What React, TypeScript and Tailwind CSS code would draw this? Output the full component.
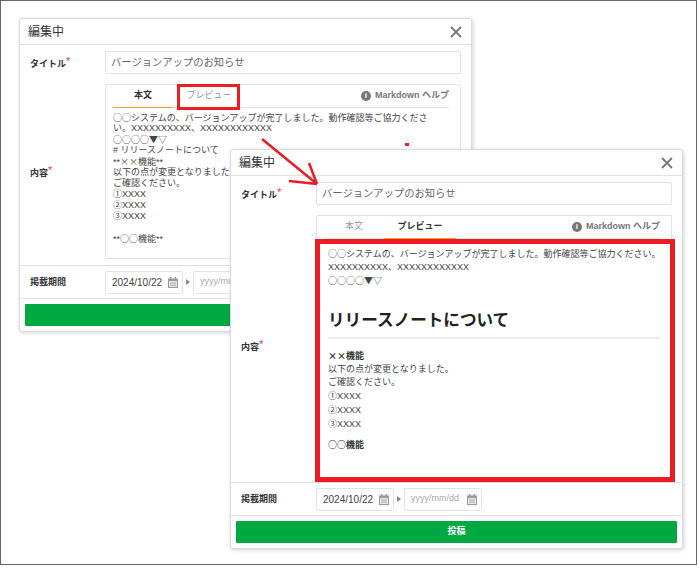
import React from "react";

const font = { fontFamily: '"Liberation Sans","Noto Sans CJK JP",sans-serif' };

function J({ children }: { children: React.ReactNode }) {
  return <span className="font-['Noto_Sans_CJK_JP']">{children}</span>;
}

function Cal({ c = "#9a9a9a" }: { c?: string }) {
  return (
    <svg width="10" height="11" viewBox="0 0 10 11" className="shrink-0">
      <rect x="0.5" y="2" width="9" height="8.5" fill="#e8e8e8" stroke={c} />
      <rect x="0" y="2" width="10" height="2" fill={c} />
      <rect x="2" y="0" width="1.5" height="3" fill={c} />
      <rect x="6.5" y="0" width="1.500" height="3" fill={c} />
      <path d="M2 6h6M2 8.200h6" stroke={c} strokeWidth="0.8" />
    </svg>
  );
}

function Label({ children, req }: { children: React.ReactNode; req?: boolean }) {
  return (
    <div className="w-[74px] pl-[10px] shrink-0 text-[9px] font-bold text-[#333] leading-none">
      {children}
      {req && <span className="text-[#e8336b] text-[11px] font-normal align-[2px]">*</span>}
    </div>
  );
}

function Close() {
  return (
    <svg width="12" height="12" viewBox="0 0 12 12" className="shrink-0">
      <path d="M1 1l10 10M11 1L1 11" stroke="#777" strokeWidth="1.8" />
    </svg>
  );
}

function Help() {
  return (
    <div className="ml-auto flex items-center gap-[4px] text-[9px] font-bold text-[#777]">
      <span className="w-[10px] h-[10px] rounded-full bg-[#777] text-white text-[8px] leading-[10px] text-center font-bold">i</span>
      Markdown ヘルプ
    </div>
  );
}

function Tabs({ active }: { active: 0 | 1 }) {
  const on = "h-[23px] flex items-center justify-center font-bold text-[#333] border-b border-[#f39a2b]";
  const off = "h-[23px] flex items-center justify-center text-[#999]";
  return (
    <div className="flex items-center h-[23px] ml-[7px] mr-[11px] text-[9px] border-b border-[#e6e6e6]">
      <div className={"w-[60px] " + (active === 0 ? on : off)}>本文</div>
      <div className={"w-[72px] " + (active === 1 ? on : off)}>プレビュー</div>
      <Help />
    </div>
  );
}

function Dates() {
  return (
    <div className="flex items-center h-[33px] border-t border-[#e2e2e2]">
      <Label>掲載期間</Label>
      <div className="ml-[11px] w-[78px] h-[23px] border border-[#e2e2e2] rounded-[2px] flex items-center pl-[6px] pr-[4px] justify-between text-[10px] text-[#444]">
        2024/10/22
        <Cal />
      </div>
      <span className="mx-[3px] w-0 h-0 border-y-[3px] border-y-transparent border-l-[4px] border-l-[#888]" />
      <div className="w-[78px] h-[23px] border border-[#e2e2e2] rounded-[2px] flex items-center pl-[6px] pr-[4px] justify-between text-[9px] text-[#aaa]">
        yyyy/mm/dd
        <Cal />
      </div>
    </div>
  );
}

function Shell({ children }: { children: React.ReactNode }) {
  return (
    <div className="w-full bg-white rounded-[3px] border border-[#dcdcdc] shadow-[1px_1px_4px_rgba(0,0,0,0.18)]">
      <div className="h-[26px] flex items-center justify-between pl-[8px] pr-[9px] border-b border-[#e2e2e2]">
        <span className="text-[12px] text-[#333]">編集中</span>
        <Close />
      </div>
      {children}
    </div>
  );
}

function TitleRow() {
  return (
    <div className="flex items-center pt-[6px]">
      <Label req>タイトル</Label>
      <div className="ml-[11px] w-[356px] h-[23px] border border-[#e2e2e2] rounded-[2px] flex items-center px-[5px] text-[10.3px] text-[#666]">
        バージョンアップのお知らせ
      </div>
    </div>
  );
}

function Submit({ text }: { text?: string }) {
  return (
    <div className="h-[33px] border-t border-[#e2e2e2] pl-[5px] pt-[5px]">
      <div className="w-[441px] h-[22px] rounded-[1px] bg-[#00a842] flex items-center justify-center text-[9px] font-bold text-white">
        {text}
      </div>
    </div>
  );
}

function WindowOne() {
  return (
    <Shell>
      <TitleRow />
      <div className="flex items-center pt-[10px] pb-[6px]">
        <Label req>内容</Label>
        <div className="ml-[11px] w-[356px] h-[175px] border border-[#e2e2e2] rounded-[2px]">
          <Tabs active={0} />
          <div className="pl-[7px] pr-[4px] pt-[4px] text-[9px] leading-[11px] text-[#444] whitespace-nowrap [&>p]:h-[11px]">
            <p><J>○○</J>システムの、バージョンアップが完了しました。動作確認等ご協力くださ</p>
            <p>い。XXXXXXXXXX、XXXXXXXXXXXX</p>
            <p><J>○○○○▼▽</J></p>
            <p># リリースノートについて</p>
            <p>**<J>××</J>機能**</p>
            <p>以下の点が変更となりました。</p>
            <p>ご確認ください。</p>
            <p>①XXXX</p>
            <p>②XXXX</p>
            <p>③XXXX</p>
            <p>&nbsp;</p>
            <p>**<J>○○</J>機能**</p>
          </div>
        </div>
      </div>
      <Dates />
      <Submit />
    </Shell>
  );
}

function WindowTwo() {
  return (
    <Shell>
      <TitleRow />
      <div className="flex items-center pt-[10px] pb-[6px]">
        <Label req>内容</Label>
        <div className="ml-[11px] w-[356px] h-[261px] border-x border-t border-[#e2e2e2] rounded-t-[2px]">
          <Tabs active={1} />
          <div className="pl-[11px] pr-[11px] pt-[8px] text-[9px] leading-[13.7px] text-[#444] whitespace-nowrap [&>p]:h-[13.7px]">
            <p><J>○○</J>システムの、バージョンアップが完了しました。動作確認等ご協力ください。</p>
            <p>XXXXXXXXXX、XXXXXXXXXXXX</p>
            <p><J>○○○○▼▽</J></p>
            <h2 className="mt-[21px] pb-[4px] border-b-2 border-[#eeeeee] text-[16.6px] leading-[24px] font-bold text-[#222]">
              リリースノートについて
            </h2>
            <p className="mt-[10px] font-bold text-[#333]"><J>××</J>機能</p>
            <p>以下の点が変更となりました。</p>
            <p>ご確認ください。</p>
            <p>①XXXX</p>
            <p>②XXXX</p>
            <p>③XXXX</p>
            <p className="mt-[7px] font-bold text-[#333]"><J>○○</J>機能</p>
          </div>
        </div>
      </div>
      <Dates />
      <Submit text="投稿" />
    </Shell>
  );
}

export default function App() {
  return (
    <div className="relative w-[700px] h-[568px] bg-white overflow-hidden" style={font}>
      <div className="absolute left-0 top-0 w-[697px] h-[565px] border border-[#666]" />
      <div className="absolute left-[19px] top-[18px] w-[453px]">
        <WindowOne />
      </div>
      <div className="absolute left-[177px] top-[84px] w-[63px] h-[26px] border-[3px] border-[#ed1c24]" />
      <div className="absolute left-[405px] top-[143px] w-[4px] h-[3px] bg-[#ed1c24]" />
      <div className="absolute left-[230px] top-[149px] w-[453px]">
        <WindowTwo />
      </div>
      <div className="absolute left-[315px] top-[239px] w-[360px] h-[243px] border-[5px] border-[#ed1c24]" />
      <svg className="absolute left-0 top-0" width="700" height="568" viewBox="0 0 700 568">
        <path d="M262 139L317 184M309 163L317 184M289 181L317 184" stroke="#ed1c24" strokeWidth="2.500" fill="none" />
      </svg>
    </div>
  );
}
